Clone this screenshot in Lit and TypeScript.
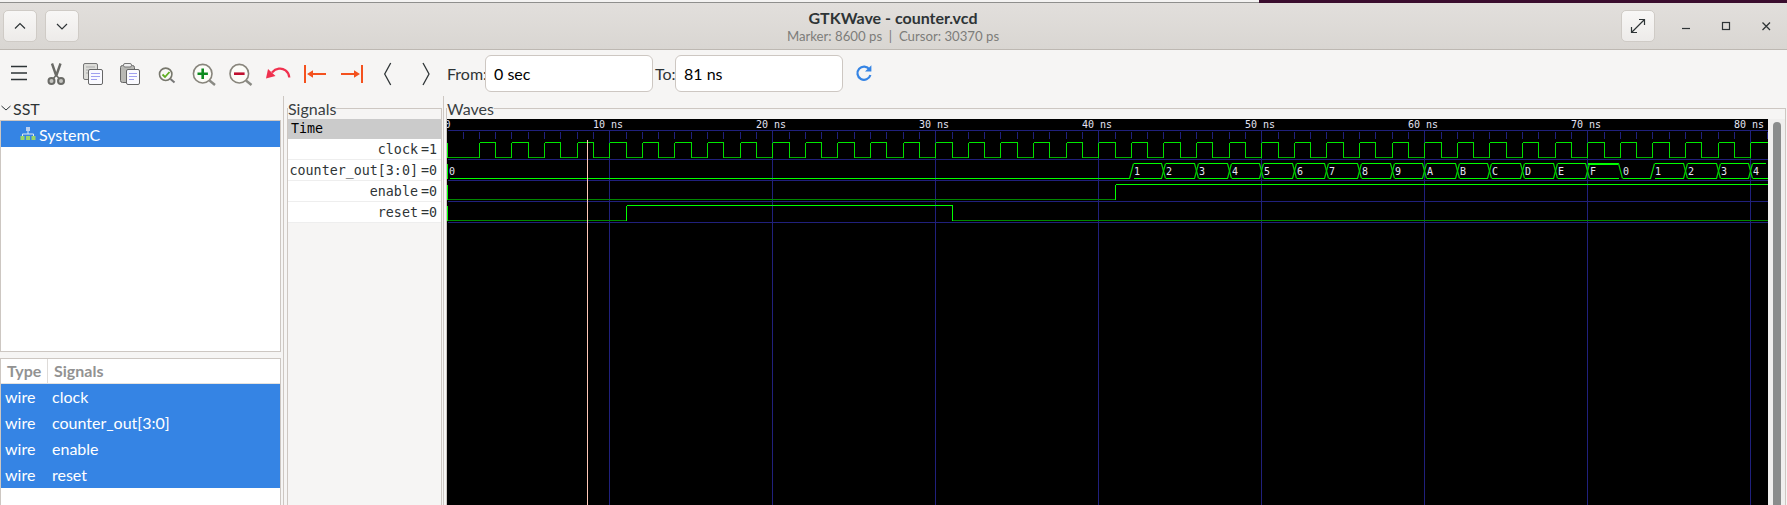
import { css, html, svg, LitElement } from 'lit';
import { customElement } from 'lit/decorators.js';

const NS = 16.3;
const xAt = (t: number) => Math.round(446.2 + NS * t);
const END = 1768;
const BOTTOM = 505;

const rowBlue = [130, 159, 180, 201, 222];
const counter = ['1', '2', '3', '4', '5', '6', '7', '8', '9', 'A', 'B', 'C', 'D', 'E', 'F', '0', '1', '2', '3', '4'];

const line = (x1: number, y1: number, x2: number, y2: number, color: string) =>
  svg`<line x1=${x1 + 0.5} y1=${y1 + 0.5} x2=${x2 + 0.5} y2=${y2 + 0.5} stroke=${color} />`;

// The waveform pane: a black canvas, in page coordinates
@customElement('wave-canvas')
export class WaveCanvas extends LitElement {
  static styles = css`
    :host {
      display: block;
      width: 1321px;
      height: 386px;
      background: #000;
    }
    svg {
      display: block;
    }
    text {
      font-family: 'DejaVu Sans Mono', monospace;
      font-size: 10px;
      fill: #e4e4f4;
    }
    .cross {
      shape-rendering: geometricPrecision;
      stroke: #00d000;
      stroke-width: 1.2;
    }
  `;

  private grid() {
    const blue = '#20207c';
    const out = [];
    for (const y of rowBlue) out.push(line(447, y, END - 1, y, blue));
    for (let t = 0; t <= 81; t++) {
      const x = xAt(t);
      if (t % 10 === 0 && t > 0) out.push(line(x, 130, x, BOTTOM, blue));
      else if (t > 0) out.push(line(x, 131, x, 138, blue));
      if (t % 10 === 0 && t > 0) {
        out.push(svg`<text x=${x - 16} y="128">${t / 10}0</text>`);
        out.push(svg`<text x=${x + 2} y="128">ns</text>`);
      }
    }
    out.push(svg`<text x="444.5" y="128">0</text>`);
    return out;
  }

  private clock() {
    const out = [line(447, 142, 447, 157, '#00ff00'), line(447, 157, xAt(2), 157, '#00b000')];
    for (let t = 2; t <= 80; t += 2) {
      const a = xAt(t);
      const b = xAt(t + 1);
      const c = Math.min(xAt(t + 2), END - 1);
      out.push(line(a, 157, a, 142, '#00e000'));
      if (t === 80) {
        out.push(line(a, 142, END - 1, 142, '#00ff00'));
        continue;
      }
      out.push(line(a, 142, b, 142, '#00e800'));
      out.push(line(b, 142, b, 157, '#00e000'));
      out.push(line(b, 157, c, 157, '#00b000'));
    }
    return out;
  }

  private bus() {
    const hi = 163;
    const lo = 178;
    const out = [line(447, hi, 447, lo, '#00ff00')];
    out.push(line(449, lo, xAt(42) - 2, lo, '#00ff00'));
    out.push(svg`<text x="449" y="175">0</text>`);
    counter.forEach((v, i) => {
      const t = 42 + i * 2;
      const x = xAt(t);
      const nx = i === counter.length - 1 ? END + 1 : xAt(t + 2);
      const prev = i === 0 ? '0' : counter[i - 1];
      // crossing at the start of the segment
      if (v !== '0') out.push(svg`<line class="cross" x1=${x - 1.5} y1=${lo + 0.5} x2=${x + 2.5} y2=${hi + 0.5} />`);
      if (prev !== '0') out.push(svg`<line class="cross" x1=${x - 1.5} y1=${hi + 0.5} x2=${x + 2.5} y2=${lo + 0.5} />`);
      out.push(line(x + 2, lo, nx - 2, lo, '#00ff00'));
      if (v !== '0') out.push(line(x + 2, hi, Math.min(nx - 2, END - 3), hi, '#00ff00'));
      if (v === 'F') out.push(svg`<rect x=${x + 1} y=${hi} width=${nx - x - 3} height="2" fill="#00ff00" />`);
      out.push(svg`<text x=${x + 3} y="175">${v}</text>`);
    });
    return out;
  }

  private single(hi: number, lo: number, rise: number, fall?: number) {
    const dim = '#008800';
    const bright = '#00ff00';
    const out = [line(447, hi, 447, lo, bright), line(447, lo, rise, lo, dim), line(rise, lo, rise, hi, bright)];
    if (fall === undefined) {
      out.push(line(rise, hi, END - 1, hi, bright));
    } else {
      out.push(line(rise, hi, fall, hi, bright));
      out.push(line(fall, hi, fall, lo, bright));
      out.push(line(fall, lo, END - 1, lo, dim));
    }
    return out;
  }

  render() {
    return html`
      <svg width="1321" height="386" viewBox="447 119 1321 386" stroke-width="1" shape-rendering="crispEdges">
        ${this.grid()} ${this.clock()} ${this.bus()}
        ${this.single(184, 199, xAt(41))} ${this.single(205, 220, xAt(11), xAt(31))}
        ${line(587, 139, 587, BOTTOM, '#ffc8b8')}
      </svg>
    `;
  }
}

const ink = '#2e3436';

// Toolbar icons, drawn in page coordinates so each one sits in its 37px slot
const toolIcons = [
  svg`<path d="M11 65.5h16M11 72h16M11 78.5h16" stroke=${ink} stroke-width="1.5" fill="none" />`,
  svg`<g stroke="#6a6a66" fill="none">
    <path d="M52 62.5l4.5 13M60.5 62.5l-4.5 13" stroke-width="2.4" />
    <path d="M55.5 75l-2.5 3M57 75l2.5 3" stroke-width="1.5" />
    <circle cx="51.5" cy="80" r="3" stroke-width="2" fill="#c4c4c0" />
    <circle cx="61" cy="80" r="3" stroke-width="2" fill="#c4c4c0" />
  </g>`,
  svg`<rect x="83.5" y="62.5" width="14" height="16" rx="1.5" fill="#dcdcd8" stroke="#777" />
    <path d="M86 66h9M86 69h9M86 72h4" stroke="#aaa" />
    <rect x="88.5" y="68.5" width="14" height="15" rx="1.5" fill="#fafaff" stroke="#666" />
    <path d="M91 72.5h9M91 75.5h9M91 78.5h6" stroke="#a0a0f0" />`,
  svg`<rect x="120.5" y="64.5" width="14" height="17" rx="2" fill="#b8b8b4" stroke="#666" />
    <rect x="123.5" y="62.5" width="8" height="3.5" rx="1.5" fill="#eee" stroke="#777" />
    <rect x="126.5" y="68.5" width="13" height="15" rx="1.5" fill="#fafaff" stroke="#666" />
    <path d="M129 72.5h8M129 75.5h8M129 78.5h5" stroke="#a0a0f0" />`,
  svg`<path d="M170.5 78l4 3.5" stroke="#777" stroke-width="2" />
    <circle cx="165.7" cy="73.3" r="6.2" fill="#f8f8f4" stroke="#77776c" stroke-width="1.6" />
    <path d="M162.5 73.5l2.5 2.5 4.5-5" stroke="#5fae22" stroke-width="1.8" fill="none" />`,
  svg`<path d="M209.5 79.5l5.5 4.5" stroke="#8a8a84" stroke-width="2.4" />
    <circle cx="202.7" cy="72.7" r="9.3" fill="#fcfcf8" stroke="#88857c" stroke-width="1.6" />
    <path d="M197.5 72.7h10.4M202.7 67.5v10.4" stroke="#0c8a1e" stroke-width="2.6" />`,
  svg`<path d="M246 79.5l5.5 4.5" stroke="#8a8a84" stroke-width="2.4" />
    <circle cx="239.3" cy="72.7" r="9.3" fill="#fcfcf8" stroke="#88857c" stroke-width="1.6" />
    <path d="M234 72.7h10.6" stroke="#c01030" stroke-width="2.6" />`,
  svg`<path d="M289.3 76.5c-0.6-6.5-6-9.5-10.5-8.8-2.8 0.4-5 1.8-6.8 3.8" stroke="#f0304e" stroke-width="2.2" fill="none" />
    <path d="M266 77.5l2-9.5 7.5 7z" fill="#f0304e" />`,
  svg`<rect x="304" y="64" width="2" height="18" fill="#f4511e" />
    <path d="M307 73l6-3.8v2.8h13v2h-13v2.8z" fill="#f4511e" />`,
  svg`<rect x="361" y="64" width="2" height="18" fill="#f4511e" />
    <path d="M360 73l-6-3.8v2.8h-13v2h13v2.8z" fill="#f4511e" />`,
  svg`<path d="M390.7 62l-6 11 6 11" stroke=${ink} stroke-width="1.3" fill="none" />`,
  svg`<path d="M423 62l6 11-6 11" stroke=${ink} stroke-width="1.3" fill="none" />`,
];

const signals = [
  ['clock', '=1'],
  ['counter_out[3:0]', '=0'],
  ['enable', '=0'],
  ['reset', '=0'],
];

@customElement('app-root')
export class AppRoot extends LitElement {
  static styles = css`
    :host {
      display: block;
      width: 1787px;
      height: 505px;
      overflow: hidden;
      background: #f6f5f4;
      color: #2e3436;
      font-family: Lato, 'Noto Sans', sans-serif;
      font-size: 16px;
    }
    .desk {
      height: 3px;
      display: flex;
    }
    .desk-left {
      flex: 1;
      background: #f4f3f2;
      border-bottom: 1px solid #8f8f8d;
      box-sizing: border-box;
    }
    .desk-right {
      width: 528px;
      background: #3a0d2e;
    }
    .head {
      height: 47px;
      box-sizing: border-box;
      display: flex;
      align-items: flex-start;
      padding: 7px 0 0 3px;
      background: linear-gradient(#e2dfdc, #d9d6d2);
      border-bottom: 1px solid #bdb8b2;
    }
    .head-btn {
      flex: none;
      width: 34px;
      height: 32px;
      box-sizing: border-box;
      border: 1px solid #cfcbc6;
      border-radius: 5px;
      background: linear-gradient(#f8f7f6, #edebe9);
      display: flex;
      align-items: center;
      justify-content: center;
      margin-right: 8px;
    }
    .title {
      flex: none;
      width: 1534px;
      padding-left: 78px;
      box-sizing: border-box;
      text-align: center;
      margin-top: -2px;
    }
    .title b {
      display: block;
      font-size: 16px;
      line-height: 20px;
      font-weight: 700;
    }
    .title span {
      display: block;
      font-size: 13.2px;
      line-height: 17px;
      color: #7d7d7a;
    }
    .controls {
      flex: none;
      display: flex;
      align-items: center;
      height: 32px;
    }
    .tools {
      height: 46px;
      display: flex;
      align-items: center;
    }
    .tool {
      width: 37px;
      height: 45px;
      display: block;
      flex: none;
    }
    .from {
      margin-left: 3px;
      width: 38px;
    }
    .to {
      margin: 0 0 0 2px;
      width: 20px;
    }
    .entry {
      width: 168px;
      height: 37px;
      box-sizing: border-box;
      border: 1px solid #cdc7c2;
      border-radius: 6px;
      background: #fff;
      padding-left: 8px;
      display: flex;
      align-items: center;
      color: #000;
    }
    .panes {
      height: 409px;
      display: flex;
      overflow: hidden;
    }
    .left {
      width: 283px;
      flex: none;
      display: flex;
      flex-direction: column;
    }
    .sst {
      height: 24px;
      display: flex;
      align-items: center;
      gap: 2px;
      padding-left: 1px;
      flex: none;
    }
    .box {
      width: 281px;
      box-sizing: border-box;
      border: 1px solid #cdc7c2;
      background: #fff;
    }
    .tree {
      height: 232px;
      flex: none;
    }
    .tree-row {
      height: 26px;
      display: flex;
      align-items: center;
      gap: 2px;
      padding-left: 19px;
      background: #3584e4;
      color: #fff;
    }
    .list {
      margin-top: 6px;
      flex: 1;
      border-bottom: none;
    }
    .list-head {
      height: 24px;
      display: grid;
      grid-template-columns: 47px 1fr;
      align-items: center;
      font-weight: 700;
      color: #929292;
      border-bottom: 1px solid #e4e2df;
    }
    .list-head span {
      padding-left: 6px;
      line-height: 24px;
    }
    .list-head span:first-child {
      border-right: 1px solid #dedbd8;
    }
    .list-row {
      height: 26px;
      box-sizing: border-box;
      padding: 0 0 1px 4px;
      display: grid;
      grid-template-columns: 47px 1fr;
      align-items: center;
      background: #3584e4;
      color: #fff;
    }
    .sig-pane {
      width: 159px;
      flex: none;
      box-sizing: border-box;
      padding: 0 1px 0 3px;
    }
    .rule {
      width: 1px;
      flex: none;
      background: #cdc7c2;
    }
    .wave-pane {
      flex: 1;
      min-width: 0;
      padding: 0 1px 0 2px;
    }
    fieldset {
      margin: 0;
      padding: 0;
      min-width: 0;
      height: 430px;
      border: 1px solid #cdc7c2;
      border-bottom: none;
    }
    legend {
      padding: 0;
      height: 25px;
      line-height: 25px;
      color: #3a4042;
    }
    .inner {
      margin-top: -2px;
    }
    .mono {
      font-family: 'DejaVu Sans Mono', monospace;
      font-size: 13.33px;
    }
    .time {
      height: 20px;
      line-height: 20px;
      padding-left: 3px;
      background: #cbcbcb;
      color: #000;
    }
    .sig {
      height: 20px;
      display: flex;
      justify-content: flex-end;
      align-items: center;
      gap: 3px;
      padding-right: 4px;
      background: #fff;
      border-bottom: 1px solid #eeeeee;
    }
    .waves {
      display: flex;
    }
    .bar {
      flex: 1;
      height: 386px;
      display: flex;
      justify-content: center;
      padding: 3px 0 0 1px;
      box-sizing: border-box;
      background: #f0efee;
    }
    .thumb {
      width: 8px;
      height: 100%;
      border-radius: 4px 4px 0 0;
      background: #8a8c8c;
    }
  `;

  private toolbar() {
    return toolIcons.map(
      (icon, i) => html`<svg class="tool" viewBox="${i * 37} 50 37 45" width="37" height="45">${icon}</svg>`,
    );
  }

  render() {
    return html`
      <div class="desk"><div class="desk-left"></div><div class="desk-right"></div></div>
      <header class="head">
        <div class="head-btn">
          <svg width="14" height="14" viewBox="0 0 14 14"><path d="M2 9.5l5-5 5 5" stroke=${ink} stroke-width="1.2" fill="none" /></svg>
        </div>
        <div class="head-btn">
          <svg width="14" height="14" viewBox="0 0 14 14"><path d="M2 5l5 5 5-5" stroke=${ink} stroke-width="1.2" fill="none" /></svg>
        </div>
        <div class="title">
          <b>GTKWave - counter.vcd</b>
          <span>Marker: 8600 ps &nbsp;|&nbsp; Cursor: 30370 ps</span>
        </div>
        <div class="head-btn">
          <svg width="16" height="16" viewBox="0 0 16 16">
            <path d="M1.5 14.5L14.5 1.5M9 1.5h5.5V7M1.5 9v5.5H7" stroke=${ink} stroke-width="1.2" fill="none" />
          </svg>
        </div>
        <div class="controls">
          <svg width="124" height="20" viewBox="1663 16 124 20">
            <path d="M1682 28.5h8" stroke=${ink} stroke-width="1.2" />
            <rect x="1722.5" y="22.5" width="7" height="7" stroke=${ink} stroke-width="1.2" fill="none" />
            <path d="M1762.5 22.5l7.5 7.5M1770 22.5l-7.5 7.5" stroke=${ink} stroke-width="1.3" />
          </svg>
        </div>
      </header>
      <nav class="tools">
        ${this.toolbar()}
        <span class="from">From:</span>
        <div class="entry">0 sec</div>
        <span class="to">To:</span>
        <div class="entry">81 ns</div>
        <svg width="20" height="20" viewBox="0 0 20 20" style="margin-left:11px">
          <path d="M15.5 6.5A6.6 6.6 0 1 0 16.4 12" stroke="#3584e4" stroke-width="2.2" fill="none" />
          <path d="M17.4 2.2v6.4h-6.4z" fill="#3584e4" />
        </svg>
      </nav>
      <div class="panes">
        <section class="left">
          <div class="sst">
            <svg width="10" height="10" viewBox="0 0 10 10"><path d="M0.5 3l4.5 4 4.5-4" stroke=${ink} fill="none" /></svg>
            <span>SST</span>
          </div>
          <div class="box tree">
            <div class="tree-row">
              <svg width="17" height="14" viewBox="0 0 17 14">
                <rect x="6" y="0" width="4" height="4" fill="#b9d0f0" />
                <path d="M8 4v3M2.5 9V7h11v2" stroke="#dfe8f5" fill="none" />
                <rect x="0.5" y="9" width="4" height="4" fill="#9ad46a" />
                <rect x="6" y="9" width="4" height="4" fill="#9ad46a" />
                <rect x="11.5" y="9" width="4" height="4" fill="#9ad46a" />
              </svg>
              <span>SystemC</span>
            </div>
          </div>
          <div class="box list">
            <div class="list-head"><span>Type</span><span>Signals</span></div>
            ${signals.map(([name]) => html`<div class="list-row"><span>wire</span><span>${name}</span></div>`)}
          </div>
        </section>
        <div class="rule"></div>
        <section class="sig-pane">
          <fieldset>
            <legend>Signals</legend>
            <div class="inner mono">
              <div class="time">Time</div>
              ${signals.map(([name, val]) => html`<div class="sig"><span>${name}</span><span>${val}</span></div>`)}
            </div>
          </fieldset>
        </section>
        <div class="rule"></div>
        <section class="wave-pane">
          <fieldset>
            <legend>Waves</legend>
            <div class="inner waves">
              <wave-canvas></wave-canvas>
              <div class="bar"><div class="thumb"></div></div>
            </div>
          </fieldset>
        </section>
      </div>
    `;
  }
}
